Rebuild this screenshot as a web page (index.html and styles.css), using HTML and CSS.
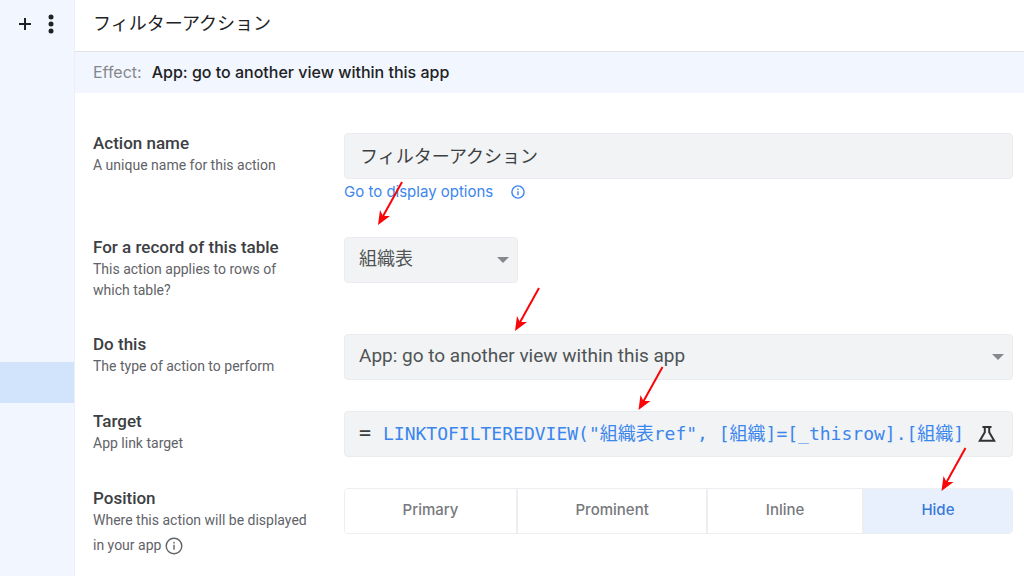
FILE: index.html
```html
<!DOCTYPE html>
<html lang="ja">
<head>
<meta charset="utf-8">
<title>フィルターアクション</title>
<link rel="stylesheet" href="styles.css">
</head>
<body>
<div class="app">
  <aside class="sidebar">
    <div class="tools">
      <button class="icon-button" type="button" aria-label="Add">
        <svg width="14" height="14" viewBox="0 0 14 14"><path d="M7 1v12M1 7h12" stroke="#202124" stroke-width="2" fill="none"/></svg>
      </button>
      <button class="icon-button" type="button" aria-label="More">
        <svg width="6" height="20" viewBox="0 0 6 20" fill="#202124"><circle cx="3" cy="3" r="2.5"/><circle cx="3" cy="10" r="2.5"/><circle cx="3" cy="17" r="2.5"/></svg>
      </button>
    </div>
    <div class="selected-item"></div>
  </aside>
  <main class="main">
    <h1 class="title">フィルターアクション</h1>
    <div class="effect"><span class="effect-label">Effect:</span><strong class="effect-value">App: go to another view within this app</strong></div>
    <form class="form">
      <div class="row">
        <div class="label"><label class="name" for="action-name">Action name</label><p class="hint">A unique name for this action</p></div>
        <div class="field">
          <input class="box action-name" id="action-name" type="text" value="フィルターアクション">
          <div class="link-line">
            <a class="link" href="#display">Go to display options</a>
            <svg width="14" height="14" viewBox="0 0 14 14"><circle cx="7" cy="7" r="6.1" fill="none" stroke="#3b86ee" stroke-width="1.4"/><path d="M7 6.2v4M7 3.6v1.4" stroke="#3b86ee" stroke-width="1.4"/></svg>
          </div>
        </div>
      </div>
      <div class="row">
        <div class="label"><label class="name" for="table">For a record of this table</label><p class="hint">This action applies to rows of which table?</p></div>
        <div class="field">
          <div class="select-wrap table-select">
            <select class="box select" id="table"><option>組織表</option></select>
            <svg class="caret" width="12" height="6" viewBox="0 0 12 6"><path d="M0 0h12L6 6z" fill="#85888c"/></svg>
          </div>
        </div>
      </div>
      <div class="row">
        <div class="label"><label class="name" for="do-this">Do this</label><p class="hint">The type of action to perform</p></div>
        <div class="field">
          <div class="select-wrap">
            <select class="box select action-select" id="do-this"><option>App: go to another view within this app</option></select>
            <svg class="caret" width="12" height="6" viewBox="0 0 12 6"><path d="M0 0h12L6 6z" fill="#85888c"/></svg>
          </div>
        </div>
      </div>
      <div class="row">
        <div class="label"><label class="name" for="target">Target</label><p class="hint">App link target</p></div>
        <div class="field">
          <div class="box formula">
            <span class="equals">=</span>
            <input class="expression" id="target" type="text" value='LINKTOFILTEREDVIEW("組織表ref", [組織]=[_thisrow].[組織]'>
            <button class="icon-button" type="button" aria-label="Test">
              <svg width="18" height="18" viewBox="0 0 18 18" fill="none" stroke="#303236" stroke-width="2"><path d="M4.5 2h9M6.8 2v5.2L1.8 15.8h14.4l-5-8.6V2"/></svg>
            </button>
          </div>
        </div>
      </div>
      <div class="row">
        <div class="label"><span class="name" id="position">Position</span>
          <p class="hint">Where this action will be displayed in your app <svg class="hint-icon" width="18" height="18" viewBox="0 0 18 18"><circle cx="9" cy="9" r="7.8" fill="none" stroke="#5f6368" stroke-width="1.4"/><path d="M9 7.8v5M9 4.8v1.6" stroke="#5f6368" stroke-width="1.4"/></svg></p></div>
        <div class="field">
          <div class="segments" role="group" aria-labelledby="position">
            <button class="segment" type="button">Primary</button>
            <button class="segment" type="button">Prominent</button>
            <button class="segment" type="button">Inline</button>
            <button class="segment active" type="button" aria-pressed="true">Hide</button>
          </div>
        </div>
      </div>
    </form>
  </main>
  <svg class="arrows" width="1024" height="576" viewBox="0 0 1024 576" aria-hidden="true">
    <defs><g id="arrow"><path d="M24 -43L4 -7" stroke="#fa0408" stroke-width="2" fill="none"/><path d="M0 0L2 -15L5 -9L12 -9Z" fill="#fa0408"/></g></defs>
    <use href="#arrow" x="378" y="225"/>
    <use href="#arrow" x="515" y="331"/>
    <use href="#arrow" x="638.500" y="410"/>
    <use href="#arrow" x="941.500" y="491"/>
  </svg>
</div>
</body>
</html>
```
FILE: styles.css
```css
* { box-sizing: border-box; }
body { margin: 0; background: #fff; color: #3c4043; font-family: Roboto, "Noto Sans CJK JP", sans-serif; }
button { font: inherit; cursor: pointer; }
.app { position: relative; display: flex; min-height: 100vh; overflow: hidden; }
.sidebar { flex: 0 0 75px; background: #f2f6fe; border-right: 1px solid #eceff5; }
.tools { display: flex; align-items: center; justify-content: flex-end; gap: 16px; height: 48px; padding-right: 20px; }
.icon-button { display: flex; padding: 0; border: 0; background: none; }
.selected-item { height: 41px; margin-top: 314px; background: #d2e3fc; }
.main { flex: 1; min-width: 0; }
.title { margin: 0; padding: 9px 18px 12px; border-bottom: 1px solid #e0e2e5; color: #202124; font-size: 18px; line-height: 30px; font-weight: 400; }
.effect { display: flex; gap: 10px; padding: 10px 18px; background: #f2f6fe; font-family: Inter, sans-serif; font-size: 16px; line-height: 21px; }
.effect-label { color: #85888c; }
.effect-value { color: #202124; font-weight: 500; }
.form { display: flex; flex-direction: column; gap: 31px; padding: 40px 11px 20px 18px; }
.row { display: flex; }
.label { flex: 0 0 251px; padding: 0 30px 2px 0; }
.name { display: block; font-size: 17px; line-height: 21px; font-weight: 500; white-space: nowrap; }
.hint { margin: 1px 0 0; color: #5f6368; font-size: 14px; line-height: 21px; }
.hint-icon { vertical-align: middle; margin: 6px 0; }
.field { flex: 1; min-width: 0; }
.box { display: block; width: 100%; height: 46px; border: 1px solid #eaecef; border-radius: 4px; background: #f1f3f4; color: #505356; font-family: Roboto, "Noto Sans CJK JP", sans-serif; font-size: 18px; }
.action-name { padding: 0 15px 2px; color: #3c4043; }
.link-line { display: flex; align-items: center; gap: 18px; height: 27px; padding-bottom: 2px; }
.link { color: #3b86ee; font-family: Inter, sans-serif; font-size: 15px; line-height: 21px; text-decoration: none; }
.select-wrap { position: relative; }
.table-select { width: 174px; }
.select { appearance: none; padding: 0 32px 4px 14px; }
.action-select { font-size: 19px; }
.caret { position: absolute; right: 9px; top: 20px; pointer-events: none; }
.formula { display: flex; align-items: center; padding: 0 16px 0 14px; }
.equals { flex: 0 0 24px; padding-bottom: 4px; color: #3c4043; font-family: "DejaVu Sans Mono", monospace; font-size: 20px; }
.expression { flex: 1; min-width: 0; height: 36px; padding: 0; border: 0; background: none; color: #3b86ee; font-family: "DejaVu Sans Mono", "Noto Sans CJK JP", monospace; font-size: 18px; line-height: 36px; }
.segments { display: flex; height: 46px; border: 1px solid #eceef1; border-radius: 4px; overflow: hidden; }
.segment { flex: 1 1 auto; padding: 0 0 3px; border: 0; border-right: 2px solid #eceef1; background: #fff; color: #77797d; font-family: Inter, sans-serif; font-size: 15px; font-weight: 500; }
.segment.active { border-right: 0; background: #e8f0fe; color: #3879d9; }
.arrows { position: absolute; left: 0; top: 0; pointer-events: none; }
```
